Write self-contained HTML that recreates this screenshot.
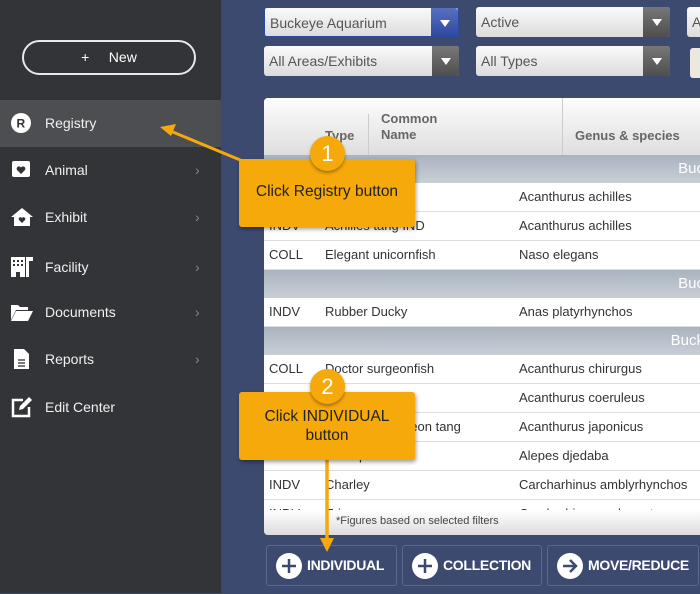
<!DOCTYPE html>
<html><head><meta charset="utf-8"><style>
*{box-sizing:border-box;margin:0;padding:0}
body{width:700px;height:593px;overflow:hidden;background:#3d4a70;font-family:"Liberation Sans",sans-serif;position:relative}
.side{position:absolute;left:0;top:0;width:221px;height:593px;background:#333438}
.newbtn{position:absolute;left:22px;top:40px;width:174px;height:35px;border:2px solid #e8e8e8;border-radius:18px;color:#fff;font-size:14px;line-height:31px;text-align:center}
.nav{position:absolute;left:0;width:221px;height:47px;color:#f0f0f0;font-size:14px}
.nav .t{position:absolute;left:45px;top:15px}
.nav .ch{position:absolute;left:195px;top:15px;color:#888;font-size:14px}
.nav svg{position:absolute;left:10px;top:12px}
.sel{position:absolute;height:30px;border-radius:3px;background:linear-gradient(#fafafa,#dcdcdc);font-size:14px;color:#555;line-height:30px;padding-left:5px}
.sel .dd{position:absolute;right:0;top:0;width:27px;height:30px;background:linear-gradient(#777,#4e4e4e);border-radius:0 3px 3px 0}
.sel .dd:after{content:"";position:absolute;left:9px;top:12px;border-left:5px solid transparent;border-right:5px solid transparent;border-top:7px solid #fff}
.tbl{position:absolute;left:264px;top:98px;width:440px;height:437px;background:#fff;border-radius:4px 0 0 4px;overflow:hidden}
.hdr{position:absolute;left:0;top:0;width:100%;height:57px;background:linear-gradient(#fdfdfd,#dedede);font-weight:bold;color:#666;font-size:13px}
.row{position:absolute;left:0;width:100%;height:29px;border-bottom:1px solid #ddd;font-size:13px;color:#333;line-height:28px}
.row span{position:absolute}
.grp{position:absolute;left:0;width:100%;height:28px;background:linear-gradient(#a9b3bf,#c8ced6);color:#fff;font-size:15px;line-height:28px;text-align:right}
.foot{position:absolute;left:0;top:412px;width:100%;height:25px;background:linear-gradient(#fff,#dcdcdc);font-size:11px;color:#444;padding-left:72px;line-height:22px}
.btn{position:absolute;top:545px;height:41px;border:1px solid #5a6890;border-radius:3px;color:#fff;font-weight:bold;font-size:14px;line-height:39px;letter-spacing:-0.3px}
.btn .c{position:absolute;left:9px;top:7px;width:26px;height:26px;border-radius:50%;background:#fff}
.btn .l{position:absolute;left:40px}
.call{position:absolute;left:239px;width:176px;height:68px;background:#f6a90b;border-radius:3px;box-shadow:1px 2px 4px rgba(0,0,0,.4);color:#222;font-size:15.5px;text-align:center}
.num{position:absolute;width:35px;height:35px;border-radius:50%;background:#f6a90b;color:#fff;font-size:22px;line-height:35px;text-align:center;box-shadow:0 2px 3px rgba(0,0,0,.35)}
</style></head><body>
<div class="side">
<div class="newbtn">+&nbsp;&nbsp;&nbsp;&nbsp;&nbsp;New</div>
<div class="nav" style="top:100px;background:#4d4e52"><svg width="22" height="22"><circle cx="11" cy="11" r="10" fill="#fff"/><text x="6.5" y="15.5" font-size="12" font-weight="bold" fill="#333" font-family="Liberation Sans">R</text></svg><span class="t">Registry</span></div>
<div class="nav" style="top:147px"><svg width="22" height="22"><rect x="2" y="2" width="18" height="16" rx="2" fill="#fff"/><path d="M11 15l-4-4a2.2 2.2 0 0 1 4-2.5a2.2 2.2 0 0 1 4 2.5z" fill="#333"/></svg><span class="t">Animal</span><span class="ch">›</span></div>
<div class="nav" style="top:194px"><svg width="24" height="22"><path d="M1 11L12 2l11 9h-3v9H4v-9z" fill="#fff"/><path d="M12 17l-3-3a1.6 1.6 0 0 1 3-2a1.6 1.6 0 0 1 3 2z" fill="#333"/></svg><span class="t">Exhibit</span><span class="ch">›</span></div>
<div class="nav" style="top:244px"><svg width="24" height="22"><path d="M1 1h14v20H10v-5H6v5H1z M16 1h7v4h-4v16h-3z" fill="#fff"/><g fill="#333"><rect x="3" y="4" width="2" height="2"/><rect x="7" y="4" width="2" height="2"/><rect x="11" y="4" width="2" height="2"/><rect x="3" y="8" width="2" height="2"/><rect x="7" y="8" width="2" height="2"/><rect x="11" y="8" width="2" height="2"/></g></svg><span class="t">Facility</span><span class="ch">›</span></div>
<div class="nav" style="top:289px"><svg width="24" height="22"><path d="M1 4h7l2 2h8v3H6L1 19z M6 10h17l-5 10H1z" fill="#fff"/></svg><span class="t">Documents</span><span class="ch">›</span></div>
<div class="nav" style="top:336px"><svg width="22" height="22"><path d="M4 1h10l5 5v15H4z" fill="#fff"/><g stroke="#333" stroke-width="1.3"><line x1="8" y1="12" x2="15" y2="12"/><line x1="8" y1="15" x2="15" y2="15"/><line x1="8" y1="18" x2="15" y2="18"/></g></svg><span class="t">Reports</span><span class="ch">›</span></div>
<div class="nav" style="top:384px"><svg width="24" height="22"><path d="M13 4H3v16h16v-9" fill="none" stroke="#fff" stroke-width="2.5"/><path d="M9 14l1-4 9-9 3 3-9 9z" fill="#fff"/></svg><span class="t">Edit Center</span></div>
</div>

<div class="sel" style="left:264px;top:7px;width:195px;border:1px solid #2a4aa0">Buckeye Aquarium<div class="dd" style="background:linear-gradient(#5870c0,#2d47a0)"></div></div>
<div class="sel" style="left:476px;top:7px;width:194px">Active<div class="dd"></div></div>
<div class="sel" style="left:687px;top:7px;width:30px">A</div>
<div class="sel" style="left:264px;top:46px;width:195px">All Areas/Exhibits<div class="dd"></div></div>
<div class="sel" style="left:476px;top:46px;width:194px">All Types<div class="dd"></div></div>
<div class="sel" style="left:690px;top:48px;width:30px;background:#ece8e0"></div>

<div class="tbl">
<div class="hdr"><span style="position:absolute;left:61px;top:30px">Type</span><span style="position:absolute;left:117px;top:13px;line-height:16px">Common<br>Name</span><span style="position:absolute;left:311px;top:30px">Genus &amp; species</span><div style="position:absolute;left:104px;top:16px;width:1px;height:41px;background:#ccc"></div><div style="position:absolute;left:298px;top:0;width:1px;height:57px;background:#ccc"></div></div>
<div class="grp" style="top:57px">Buc</div>
<div class="row" style="top:85px"><span style="left:5px">INDV</span><span style="left:61px">Achilles tang</span><span style="left:255px">Acanthurus achilles</span></div>
<div class="row" style="top:114px"><span style="left:5px">INDV</span><span style="left:61px">Achilles tang IND</span><span style="left:255px">Acanthurus achilles</span></div>
<div class="row" style="top:143px"><span style="left:5px">COLL</span><span style="left:61px">Elegant unicornfish</span><span style="left:255px">Naso elegans</span></div>
<div class="grp" style="top:172px">Buc</div>
<div class="row" style="top:200px"><span style="left:5px">INDV</span><span style="left:61px">Rubber Ducky</span><span style="left:255px">Anas platyrhynchos</span></div>
<div class="grp" style="top:229px">Buck</div>
<div class="row" style="top:257px"><span style="left:5px">COLL</span><span style="left:61px">Doctor surgeonfish</span><span style="left:255px">Acanthurus chirurgus</span></div>
<div class="row" style="top:286px"><span style="left:5px">COLL</span><span style="left:61px">Blue tang</span><span style="left:255px">Acanthurus coeruleus</span></div>
<div class="row" style="top:315px"><span style="left:5px">COLL</span><span style="left:61px">Japanese surgeon tang</span><span style="left:255px">Acanthurus japonicus</span></div>
<div class="row" style="top:344px"><span style="left:5px">COLL</span><span style="left:61px">Shrimp scad</span><span style="left:255px">Alepes djedaba</span></div>
<div class="row" style="top:373px"><span style="left:5px">INDV</span><span style="left:61px">Charley</span><span style="left:255px">Carcharhinus amblyrhynchos</span></div>
<div class="row" style="top:402px"><span style="left:5px">INDV</span><span style="left:61px">Eric</span><span style="left:255px">Carcharhinus melanopterus</span></div>
<div class="foot">*Figures based on selected filters</div>
</div>

<div class="btn" style="left:266px;width:131px"><div class="c"><svg width="26" height="26"><path d="M13 6v14M6 13h14" stroke="#3d4a70" stroke-width="2.5"/></svg></div><span class="l">INDIVIDUAL</span></div>
<div class="btn" style="left:402px;width:140px"><div class="c"><svg width="26" height="26"><path d="M13 6v14M6 13h14" stroke="#3d4a70" stroke-width="2.5"/></svg></div><span class="l">COLLECTION</span></div>
<div class="btn" style="left:547px;width:152px"><div class="c"><svg width="26" height="26"><path d="M6 13h13M13 7l6 6-6 6" stroke="#3d4a70" stroke-width="2.5" fill="none"/></svg></div><span class="l">MOVE/REDUCE</span></div>

<svg style="position:absolute;left:0;top:0" width="700" height="593">
<line x1="245" y1="162" x2="168" y2="130" stroke="#f6a90b" stroke-width="3"/>
<path d="M160 127l16-3-5 12z" fill="#f6a90b"/>
<line x1="327" y1="455" x2="327" y2="540" stroke="#f6a90b" stroke-width="3.5"/>
<path d="M320 538h14l-7 14z" fill="#f6a90b"/>
</svg>
<div class="call" style="top:159px;line-height:66px">Click Registry button</div>
<div class="num" style="left:310px;top:136px">1</div>
<div class="call" style="top:392px;padding-top:15px;line-height:19px">Click INDIVIDUAL<br>button</div>
<div class="num" style="left:310px;top:369px">2</div>
</body></html>
